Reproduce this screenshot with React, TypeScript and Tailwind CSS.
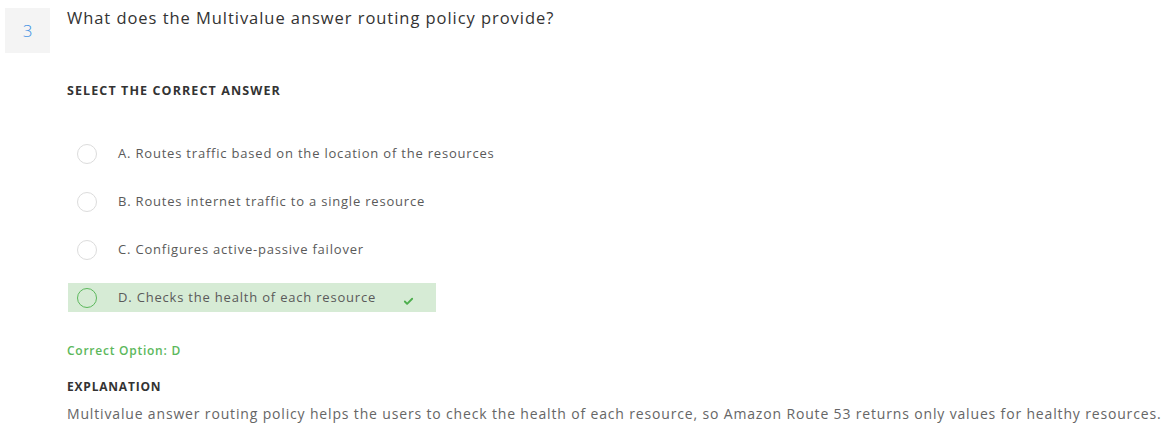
import { Check } from 'lucide-react';

interface Option {
  key: string;
  text: string;
}

const options: Option[] = [
  { key: 'A', text: 'Routes traffic based on the location of the resources' },
  { key: 'B', text: 'Routes internet traffic to a single resource' },
  { key: 'C', text: 'Configures active-passive failover' },
  { key: 'D', text: 'Checks the health of each resource' },
];

const correct = 'D';

export default function App() {
  return (
    <div className="flex items-start pl-[5px] bg-white w-[1170px] h-[436px] overflow-hidden font-['Open_Sans',sans-serif]">
      <div className="shrink-0 mt-[8px] w-[45px] h-[45px] bg-[#f4f4f4] flex items-center justify-center text-[#3b8fe3] text-[17px] font-light">
        3
      </div>

      <div className="shrink-0 ml-[17px] pt-[8px] flex flex-col">
        <h2 className="text-[16.5px] leading-[20px] text-[#333] tracking-[0.95px] whitespace-nowrap">
          What does the Multivalue answer routing policy provide?
        </h2>

        <p className="mt-[55px] text-[12.5px] leading-[16px] font-bold text-[#333] uppercase tracking-[1.1px]">
          Select the correct answer
        </p>

        <ul className="mt-[40px] flex flex-col gap-[19px]">
          {options.map(opt => {
            const isCorrect = opt.key === correct;
            return (
              <li
                key={opt.key}
                className={`ml-[1px] w-[368px] h-[29px] flex items-center pl-[9px] ${isCorrect ? 'bg-[#d6ebd5]' : ''}`}
              >
                <span
                  className={`shrink-0 w-[20px] h-[20px] rounded-full border ${isCorrect ? 'border-[#5cb85c]' : 'border-[#dcdcdc] bg-white'}`}
                />
                <span className="ml-[21px] text-[13px] text-[#5a5a5a] tracking-[0.8px] whitespace-nowrap">
                  {opt.key}. {opt.text}
                </span>
                {isCorrect && <Check className="shrink-0 ml-[27px] mt-[8px] w-[11px] h-[11px] text-[#4cae4c]" strokeWidth={4} />}
              </li>
            );
          })}
        </ul>

        <p className="mt-[31px] text-[12px] leading-[16px] font-semibold text-[#5cb85c] tracking-[0.75px]">
          Correct Option: D
        </p>

        <p className="mt-[20px] text-[12px] leading-[16px] font-bold text-[#333] uppercase tracking-[0.8px]">
          Explanation
        </p>

        <p className="mt-[9px] text-[14px] leading-[20px] text-[#666] tracking-[0.84px] whitespace-nowrap">
          Multivalue answer routing policy helps the users to check the health of each resource, so Amazon Route 53 returns only values for healthy resources.
        </p>
      </div>
    </div>
  );
}
